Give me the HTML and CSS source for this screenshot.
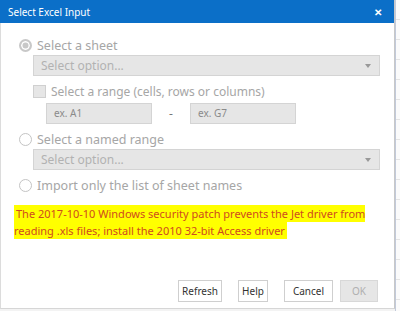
FILE: index.html
```html
<!DOCTYPE html>
<html lang="en">
<head>
    <meta charset="UTF-8">
    <meta name="viewport" content="width=device-width, initial-scale=1.0">
    <title>Select Excel Input</title>
    <link rel="stylesheet" href="styles.css">
</head>
<body>
    <div class="dialog">
        <div class="titlebar">
            <span class="title">Select Excel Input</span>
            <span class="close">&#x2715;</span>
        </div>
        <div class="content">
            <div class="radio-row"><span class="radio checked"></span>Select a sheet</div>
            <div class="select">Select option...<span class="caret"></span></div>
            <div class="check-row"><span class="checkbox"></span>Select a range (cells, rows or columns)</div>
            <div class="range">
                <div class="input">ex. A1</div>
                <span class="dash">-</span>
                <div class="input">ex. G7</div>
            </div>
            <div class="radio-row second"><span class="radio"></span>Select a named range</div>
            <div class="select">Select option...<span class="caret"></span></div>
            <div class="radio-row third"><span class="radio"></span>Import only the list of sheet names</div>
            <p class="warning"><span>The 2017-10-10 Windows security patch prevents the Jet driver from reading .xls files; install the 2010 32-bit Access driver</span></p>
        </div>
        <div class="footer">
            <button class="btn refresh">Refresh</button>
            <button class="btn help">Help</button>
            <button class="btn cancel">Cancel</button>
            <button class="btn ok" disabled>OK</button>
        </div>
    </div>
    <div class="sheet-edge"></div>
</body>
</html>
```

FILE: styles.css
```css
body {
    margin: 0;
    display: flex;
    height: 311px;
    background: #f3f3f3;
    font-family: "Noto Sans", "Open Sans", sans-serif;
    overflow: hidden;
}
.dialog {
    width: 395px;
    height: 309px;
    background: #fff;
    border-left: 1px solid #dcdcdc;
    border-right: 1px solid #c8c8c8;
    border-bottom: 1px solid #d6d6d6;
    box-sizing: border-box;
    display: flex;
    flex-direction: column;
}
.titlebar {
    height: 23px;
    background: #0b6fc8;
    color: #fff;
    display: flex;
    align-items: center;
    justify-content: space-between;
    padding: 0 10px 0 8px;
    margin-left: -1px;
}
.title {
    font-size: 10px;
}
.close {
    font-size: 10px;
    font-weight: bold;
    margin-right: 2px;
}
.content {
    padding: 14px 14px 0 18px;
    color: #a6a6a6;
    font-size: 12px;
}
.radio-row {
    display: flex;
    align-items: center;
    height: 16px;
    font-size: 12.5px;
}
.radio-row.second, .radio-row.third {
    margin-top: 7px;
}
.radio {
    width: 11px;
    height: 11px;
    border: 1px solid #c4c4c4;
    border-radius: 50%;
    background: #fff;
    margin-right: 5px;
}
.radio.checked {
    border: 2px solid #c8c8c8;
    width: 9px;
    height: 9px;
    background: #c8c8c8;
    box-shadow: inset 0 0 0 1.5px #fff;
}
.select {
    position: relative;
    height: 21px;
    margin: 2px 0 0 14px;
    background: #e6e6e6;
    border: 1px solid #d4d4d4;
    box-sizing: border-box;
    padding-left: 7px;
    line-height: 19px;
    color: #b2b2b2;
}
.caret {
    position: absolute;
    right: 8px;
    top: 8px;
    border-left: 3.5px solid transparent;
    border-right: 3.5px solid transparent;
    border-top: 4px solid #999;
}
.check-row {
    display: flex;
    align-items: center;
    height: 15px;
    margin: 8px 0 0 14px;
}
.checkbox {
    width: 13px;
    height: 13px;
    background: #e6e6e6;
    border: 1px solid #d0d0d0;
    box-sizing: border-box;
    margin-right: 5px;
}
.range {
    display: flex;
    align-items: center;
    margin: 4px 0 0 27px;
}
.input {
    width: 106px;
    height: 21px;
    background: #e6e6e6;
    border: 1px solid #d4d4d4;
    box-sizing: border-box;
    padding-left: 7px;
    line-height: 19px;
    font-size: 10px;
    color: #8a8a8a;
}
.dash {
    width: 38px;
    text-align: center;
    color: #777;
}
.warning {
    margin: 12px 0 0 -5px;
    font-size: 11px;
    line-height: 17px;
    color: #cf4a1f;
    width: 372px;
}
.warning span {
    background: #ffff00;
    padding: 1px 2px;
}
.footer {
    margin-top: auto;
    display: flex;
    justify-content: flex-end;
    gap: 16px;
    padding: 0 16px 6px 0;
}
.btn {
    height: 22px;
    background: #fff;
    border: 1px solid #cfcfcf;
    font-family: "Noto Sans", "Open Sans", sans-serif;
    font-size: 10px;
    color: #333;
    padding: 0;
}
.refresh {
    width: 44px;
}
.help {
    width: 30px;
}
.cancel {
    width: 49px;
}
.btn.ok {
    margin-left: -9px;
    width: 38px;
    background: #e6e6e6;
    border-color: #d8d8d8;
    color: #b0b0b0;
}
.sheet-edge {
    flex: 1;
    border-left: 1px solid #c2cada;
    background: repeating-linear-gradient(#fbfbfb 0, #fbfbfb 19px, #e4e4e4 19px, #e4e4e4 20px);
}
```
